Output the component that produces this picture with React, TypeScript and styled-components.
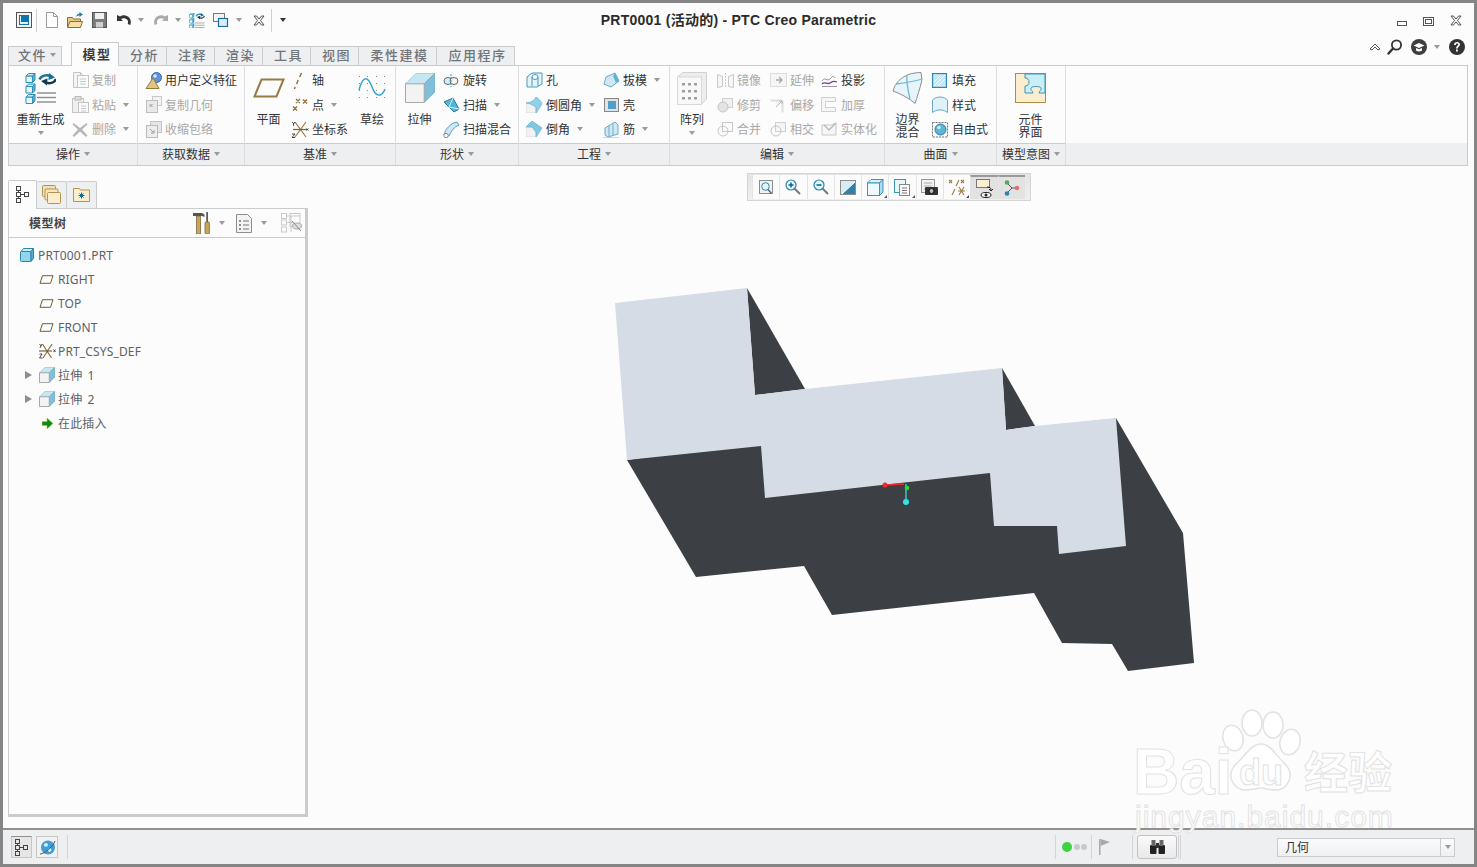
import React from 'react';
import styled, { createGlobalStyle } from 'styled-components';

const Global = createGlobalStyle`
  html, body { margin: 0; padding: 0; background: #fcfcfc; overflow: hidden; }
  body { font-family: "Noto Sans", "Noto Sans CJK SC", sans-serif; font-size: 12px; color: #3a3a3a; }
  * { box-sizing: border-box; }
`;

const line = '#c9cbcd';
const band = '#eeeff1';
const cjk = '"Noto Sans", "Noto Sans CJK SC", sans-serif';

/* ---------- icon drawings ---------- */
const IconSvg = styled.svg<{ $ml?: number }>`
  display: block;
  flex-shrink: 0;
  margin-left: ${p => p.$ml || 0}px;
`;

const Cube = ({ x, y, s, d = 3, front = '#e6f6fb', top = '#bfe8f5', side = '#5fb2d3', stroke = '#2f8fb5' }: any) => (
  <g stroke={stroke} strokeWidth="1" strokeLinejoin="round">
    <rect x={x} y={y + d} width={s - d} height={s - d} fill={front} />
    <polygon points={`${x},${y + d} ${x + d},${y} ${x + s},${y} ${x + s - d},${y + d}`} fill={top} />
    <polygon points={`${x + s - d},${y + d} ${x + s},${y} ${x + s},${y + s - d} ${x + s - d},${y + s}`} fill={side} />
  </g>
);

const Extrude = ({ s = 30 }: { s?: number }) => {
  const d = s * 0.36;
  return (
    <g strokeLinejoin="round">
      <polygon points={`0.5,${d} ${d},0.5 ${s - 0.5},0.5 ${s - d},${d}`} fill="#c6e6f1" stroke="#9fc9da" strokeWidth="0.8" />
      <polygon points={`${s - d},${d} ${s - 0.5},0.5 ${s - 0.5},${s - d} ${s - d},${s - 0.5}`} fill="#7fbfd9" stroke="#6aa9c4" strokeWidth="0.8" />
      <rect x="0.5" y={d} width={s - d - 0.5} height={s - d - 0.5} fill="#f3f3f3" stroke="#a8a8a8" strokeWidth="1" />
    </g>
  );
};

const Lines = ({ x, y, w, gap = 4.5, n = 3, c = '#8c8c8c', sw = 1.4 }: any) => (
  <g stroke={c} strokeWidth={sw}>
    {Array.from({ length: n }).map((_, i) => <line key={i} x1={x} x2={x + w} y1={y + i * gap} y2={y + i * gap} />)}
  </g>
);

const TreeGlyph = ({ c = '#444', sw = 1 }: { c?: string; sw?: number }) => (
  <g fill="none" stroke={c} strokeWidth={sw}>
    <rect x="1.5" y="0.5" width="4" height="4" />
    <rect x="1.5" y="6.5" width="4" height="4" />
    <rect x="1.5" y="12.5" width="4" height="4" />
    <rect x="9.5" y="6.5" width="4" height="4" />
    <path d="M3.5 4.5v2M3.5 10.5v2M5.5 8.5h4" />
  </g>
);

const Regen = () => (
  <>
    <Cube x={1} y={0.5} s={9} d={2.5} />
    <Cube x={1} y={11} s={9} d={2.5} />
    <Cube x={1} y={21.5} s={9} d={2.5} />
    <path d="M14.500 6.500C16 2.500 22 1 26 3.500" fill="none" stroke="#1a6f98" strokeWidth="2.400" />
    <polygon points="24,0 30,4.500 23.500,7" fill="#1a6f98" />
    <path d="M31 6C29.500 10 24 11.500 20 9" fill="none" stroke="#14384c" strokeWidth="2.400" />
    <polygon points="22,12.500 16,8 22.500,5.500" fill="#14384c" />
    <Lines x={12} y={20} w={19} />
  </>
);

const Doc = ({ c = '#bdbdbd', f = '#fff' }: any) => (
  <path d="M1.500.5h7l4 4v11h-11z M8.500.5v4h4" fill={f} stroke={c} strokeWidth="1" />
);

const Disc = ({ cx, cy, r, c = '#c4c4c4', f = '#f2f2f2' }: any) => (
  <circle cx={cx} cy={cy} r={r} fill={f} stroke={c} strokeWidth="1" />
);

const icons: Record<string, [number, number, React.ReactNode]> = {
  window: [16, 16, <><rect x=".5" y=".5" width="15" height="15" fill="#f4f4f4" stroke="#555" /><rect x="3" y="3" width="10" height="10" fill="#0f74ad" /><path d="M5 4v6h7v2H4V4z" fill="#dff2fa" /></>],
  newdoc: [13, 16, <Doc c="#9a9a9a" />],
  open: [16, 16, <><path d="M.5 5.500h5l1 1.500h7v8h-13z" fill="#e8c98b" stroke="#8e6c2f" /><path d="M.5 15.500l2.500-6h12.500l-2 6z" fill="#f6dfa9" stroke="#8e6c2f" /><path d="M9 5c.5-2.500 2-3.500 3.500-3.500V0L16 2.500 12.500 5V3.500C11 3.500 10 4 9 5z" fill="#2d7da6" /></>],
  save: [15, 16, <><rect x=".5" y=".5" width="14" height="15" fill="#7d7d7d" stroke="#555" /><rect x="3" y="1" width="9" height="6" fill="#f1f1f1" /><rect x="4" y="10" width="7" height="5.500" fill="#cfcfcf" /></>],
  undo: [16, 12, <path d="M1 1v6h6L5 5c2-1.500 5-1 6.500 1 .6 1 .7 2.500.3 4l2.500 1c1-2.500.6-5-.8-7-2.500-3-6.500-3.500-9.500-1.500z" fill="#333" />],
  redo: [16, 12, <path d="M15 1v6H9l2-2c-2-1.500-5-1-6.500 1-.6 1-.7 2.500-.3 4l-2.500 1c-1-2.500-.6-5 .8-7 2.500-3 6.500-3.500 9.500-1.500z" fill="#a9a9a9" />],
  regenS: [16, 15, <g transform="scale(.5)"><Regen /></g>],
  windows: [16, 14, <><rect x=".5" y=".5" width="11" height="8" fill="#f4f4f4" stroke="#777" /><rect x="5.500" y="5.500" width="9" height="8" fill="#d8eef7" stroke="#1c6f9c" strokeWidth="1.200" /></>],
  xclose: [12, 11, <path d="M1 1h2.500L6 4l2.500-3H11L7.500 5.500 11 10H8.500L6 7l-2.500 3H1l3.500-4.500z" fill="#f6f6f6" stroke="#444" strokeWidth=".9" />],
  minim: [10, 5, <rect x=".5" y=".5" width="9" height="4" fill="#fafafa" stroke="#555" />],
  maxim: [11, 9, <><rect x=".5" y=".5" width="10" height="8" fill="none" stroke="#555" /><rect x="2.500" y="2.500" width="6" height="4" fill="none" stroke="#555" /></>],
  chevron: [12, 8, <path d="M1 6l5-5 5 5-2 1-3-3-3 3z" fill="#fff" stroke="#444" strokeWidth=".9" />],
  search: [15, 16, <><circle cx="9.500" cy="6" r="4.600" fill="#fff" stroke="#333" strokeWidth="1.800" /><path d="M6 9.500l-4.500 5" stroke="#333" strokeWidth="2.400" strokeLinecap="round" /></>],
  learn: [16, 16, <><circle cx="8" cy="8" r="8" fill="#3c3f42" /><path d="M2.500 6.500L8 4l5.500 2.500L8 9z" fill="#fff" /><path d="M5 9v2.500c2 1.200 4 1.200 6 0V9L8 10.300z" fill="#fff" /></>],
  help: [16, 16, <><circle cx="8" cy="8" r="8" fill="#333" /><path d="M5 6c0-4 6-4 6-.5 0 2-2.300 2.200-2.300 4H7c0-2.500 2.200-2.700 2.200-4 0-1.300-2.400-1.300-2.400.5z" fill="#fff" /><rect x="7" y="10.500" width="1.800" height="2" fill="#fff" /></>],
  regen: [31, 31, <Regen />],
  copy: [17, 16, <><Doc c="#c4c4c4" f="#f4f4f4" /><g transform="translate(5 3)" opacity=".95"><rect x=".5" y=".5" width="11" height="12" fill="#fafafa" stroke="#c4c4c4" /><Lines x={3} y={4} w={6} gap={2.500} c="#c8c8c8" sw={1} /></g></>],
  paste: [17, 17, <><rect x=".5" y="2.500" width="11" height="14" fill="#efefef" stroke="#c4c4c4" /><rect x="3" y=".5" width="6" height="3.500" fill="#ddd" stroke="#bbb" /><rect x="6.500" y="6.500" width="10" height="10" fill="#fafafa" stroke="#c4c4c4" /><Lines x={9} y={10} w={5} gap={2.500} c="#c8c8c8" sw={1} /></>],
  del: [16, 15, <path d="M1.500 1l6.500 5 6.500-5 1 1.500L10 7.500l5.500 6-1.500 1.500L8 9.500 2 15 .5 13.500 6 7.500.5 2.500z" fill="#b6b6b6" />],
  udf: [18, 17, <><circle cx="11.500" cy="5.500" r="5" fill="#5f92d6" stroke="#3a66a8" /><circle cx="10" cy="4" r="1.800" fill="#d8e7fa" /><path d="M8 6l6 10.500H1z" fill="#e1c382" stroke="#967a3c" /></>],
  copygeo: [18, 17, <><rect x="7.500" y=".5" width="9" height="9" fill="#f3f3f3" stroke="#c9c9c9" /><rect x="1.500" y="4.500" width="11" height="12" fill="#e9e9e9" stroke="#bdbdbd" /><path d="M4.500 8l3 3M7.500 8l-3 3" stroke="#9b9b9b" /></>],
  shrink: [18, 17, <><rect x="5.500" y=".5" width="11" height="11" fill="#e6e6e6" stroke="#c4c4c4" /><rect x="1.500" y="4.500" width="11" height="12" fill="#ededed" stroke="#bbb" /><path d="M5 8l4 4m0-3v3H6" stroke="#9e9e9e" fill="none" /></>],
  plane: [32, 20, <polygon points="8.500,1.500 30.500,1.500 23.500,18.500 1.500,18.500" fill="#fcfcfc" stroke="#977a46" strokeWidth="2" />],
  axis: [12, 17, <path d="M9.500 1L7.700 5M6.200 8L4.600 12M3.200 15L2.400 17" stroke="#8a6d37" strokeWidth="1.400" fill="none" />],
  point: [16, 14, <g stroke="#8f6f38" strokeWidth="1.300"><path d="M4 1l4 4M8 1L4 5M11 1.500l4 4M15 1.500l-4 4M1 8.500l4 4M5 8.500l-4 4" /></g>],
  csys: [17, 17, <><path d="M3 1l11 15M14 1L3 16" stroke="#9a7b45" strokeWidth="1.200" fill="none" /><path d="M1 8.500h15" stroke="#7c6030" strokeWidth="1.200" /><path d="M0 1l2 2M3 1L1.500 3v1.800M0 13h3l-3 3.500h3M14.500 7.500l2 2M16.500 7.500l-2 2" stroke="#333" strokeWidth=".9" fill="none" /></>],
  sketch: [28, 28, <><g fill="#8c8c8c">{[2, 9, 16, 23].flatMap(y => [1, 9, 18, 26].map(x => <rect key={x + '-' + y} x={x} y={y} width="1" height="1" />))}</g><path d="M1 16C5 1 10 2 14 13s10 10 13 2" fill="none" stroke="#36a3d3" strokeWidth="1.500" /></>],
  extrude: [30, 30, <Extrude />],
  revolve: [17, 13, <><ellipse cx="5" cy="7" rx="4" ry="3.500" fill="#d5eff8" stroke="#666" /><ellipse cx="11" cy="7" rx="4" ry="3.500" fill="#f5f5f5" stroke="#666" /><path d="M8 0v13" stroke="#3a93bd" strokeDasharray="2 1" /></>],
  sweep: [17, 16, <><polygon points="1,5 10,1 16,12 11,15 6,10" fill="#54b5da" stroke="#26799e" /><path d="M6 10l4-9M6 10l10 2" stroke="#d9f1fa" /></>],
  sweepblend: [17, 17, <><path d="M1 14C2 8 8 2 14 1l2 3c-5 2-8 6-10 11z" fill="#cfe9f4" stroke="#5a9cba" /><circle cx="3" cy="14.500" r="2.200" fill="#fff" stroke="#888" /></>],
  hole: [17, 16, <><polygon points="1,5 6,1 16,1 16,12 11,15 1,15" fill="#e2f3f9" stroke="#4a9abc" /><ellipse cx="9" cy="5" rx="3" ry="2.500" fill="#fff" stroke="#4a9abc" /><path d="M6 5v9M12 5v9" stroke="#4a9abc" /></>],
  round: [17, 16, <><polygon points="0,6 7,6 10,12 10,16 0,16" fill="#f2f2f2" stroke="#ccc" strokeWidth=".6" /><path d="M0 6C4 6 9 3 10 0c3 2 5 4 6 7l-6 9v-6C7 8 3 6 0 6z" fill="#8ed1e8" stroke="#5aa9c8" strokeWidth=".6" /></>],
  chamfer: [17, 16, <><polygon points="0,6 7,6 10,12 10,16 0,16" fill="#f2f2f2" stroke="#ccc" strokeWidth=".6" /><polygon points="0,6 6,0 16,7 10,16 10,11 6,6" fill="#7fc9e3" stroke="#5aa9c8" strokeWidth=".6" /></>],
  draft: [17, 16, <><polygon points="3,5 12,1 16,9 8,15 1,12" fill="#cfe9f4" stroke="#6aaac6" /><polygon points="12,1 16,9 13,11 10,4" fill="#5cb3d6" /></>],
  shell: [17, 16, <><rect x="1.500" y="1.500" width="14" height="13" fill="#dde3e8" stroke="#888" /><rect x="5" y="4" width="8" height="8" fill="#4f9fc7" /></>],
  rib: [17, 17, <><polygon points="2,7 12,1 15,4 15,13 5,16 2,14" fill="#cfe9f4" stroke="#6aaac6" /><path d="M6 5v10M10 3v11" stroke="#6aaac6" /><path d="M.5 16.500h16" stroke="#aaa" strokeDasharray="1 1" /></>],
  array: [30, 33, <><polygon points="0.500,5 6,.5 29.500,.5 29.500,27 24,32.500 .5,32.500" fill="#ededed" stroke="#d0d0d0" /><rect x=".5" y="5" width="24" height="27.500" fill="#f8f8f8" stroke="#d8d8d8" /><g fill="#9f9f9f">{[11, 18, 25].flatMap(y => [5, 11, 17].map(x => <rect key={x + '-' + y} x={x} y={y} width="3" height="2.500" />))}</g></>],
  mirror: [17, 15, <g fill="#f6f6f6" stroke="#c9c9c9"><path d="M.5 1.500l5 2v10l-5 1zM16.500 1.500l-5 2v10l5 1z" /><path d="M8.500 0v15" strokeDasharray="2 1" /></g>],
  trim: [17, 16, <><rect x="5.500" y="1.500" width="10" height="9" fill="#f1f1f1" stroke="#cfcfcf" /><Disc cx={6} cy={10} r={5} f="#e4e4e4" /></>],
  merge: [17, 16, <><rect x="5.500" y="1.500" width="10" height="9" fill="none" stroke="#c7c7c7" /><Disc cx={6} cy={10} r={5} f="none" /></>],
  extend: [17, 14, <><rect x=".5" y=".5" width="16" height="13" fill="#f5f5f5" stroke="#dcdcdc" /><path d="M6 7h6m-3-3l3 3-3 3" fill="none" stroke="#a9a9a9" strokeWidth="1.300" /></>],
  offset: [17, 16, <><path d="M.5 3.500h12M12.500 3.500v12" fill="none" stroke="#ddd" strokeWidth="2" /><path d="M6 10l6-6m-3 0h3v3" fill="none" stroke="#b5b5b5" /></>],
  intersect: [17, 16, <><rect x="5.500" y="1.500" width="10" height="9" fill="#f5f5f5" stroke="#cfcfcf" /><Disc cx={6} cy={10} r={5} f="none" /></>],
  project: [17, 14, <><path d="M1 8c3-5 5 1 8-2s3-4 5-1" fill="none" stroke="#999" /><path d="M1 11c3-3 5 1 8-1s4-2 7-1" fill="none" stroke="#7c3c9e" strokeWidth="1.300" /><path d="M1 13.500h15" stroke="#999" /></>],
  thicken: [15, 15, <path d="M.5.5h14v4h-10v6h10v4H.5z" fill="#f6f6f6" stroke="#cfcfcf" />],
  solidify: [17, 15, <><path d="M1 3h9l5-2v12H1z" fill="#f6f6f6" stroke="#c7c7c7" /><path d="M3 3l5 5 7-7" fill="none" stroke="#bbb" strokeWidth="1.500" /></>],
  boundary: [31, 32, <><path d="M1 19C3 11 9 5 18 2c4-1 8-1.500 11-1.500l1 7C28 17 25 25 23 31.500 17 26 9 22 1 19z" fill="#e6f5fa" stroke="#8d8d8d" /><path d="M15 3c-1 7 1 15 3 24M4 12c8-1 16-2 26-5" fill="none" stroke="#6eb8d6" strokeWidth="1.300" /></>],
  fill: [15, 15, <><rect x=".5" y=".5" width="14" height="14" fill="#c5e8f4" stroke="#2d87ad" strokeWidth="1.300" /><path d="M2 13L13 2M2 9l7-7M6 13l7-7" stroke="#fff" /></>],
  style: [16, 17, <path d="M.5 4C5 0 11 0 15.500 4v12.500C11 13 5 13 .5 16.500z" fill="#dff2f9" stroke="#6aaac6" />],
  freeform: [17, 17, <><rect x=".5" y="1.500" width="15" height="14.500" fill="none" stroke="#777" strokeDasharray="2 1" /><circle cx="8.500" cy="8.500" r="5.500" fill="#5bb4d8" stroke="#2e7fa3" /><circle cx="7" cy="6.500" r="1.800" fill="#c9ecf7" /></>],
  component: [31, 30, <><rect x=".5" y=".5" width="30" height="29" fill="#fbeecf" stroke="#b08d46" strokeWidth="1" /><path d="M10 1H30V20H24C24 18 27 17 26 15 25 13 17 13 16 15 15 17 18 18 18 20H10V13C13 13 14 11 14 9 14 7 13 5 10 5Z" fill="#c9eef8" stroke="#3d94b8" /></>],
  fit: [14, 15, <><rect x=".5" y=".5" width="13" height="13" fill="#f2f2f2" stroke="#8d8d8d" /><circle cx="6.500" cy="6.500" r="3.800" fill="#e3f4fa" stroke="#2b86ad" /><path d="M9 9.500l3.500 4" stroke="#666" strokeWidth="1.500" /></>],
  zoomin: [16, 16, <><circle cx="6" cy="6" r="5" fill="#e3f4fa" stroke="#2b86ad" strokeWidth="1.200" /><path d="M3.500 6h5M6 3.500v5" stroke="#0f6087" strokeWidth="1.500" /><path d="M9.500 9.500l5.500 5.500" stroke="#777" strokeWidth="2" /></>],
  zoomout: [16, 16, <><circle cx="6" cy="6" r="5" fill="#e3f4fa" stroke="#2b86ad" strokeWidth="1.200" /><path d="M3.500 6h5" stroke="#0f6087" strokeWidth="1.500" /><path d="M9.500 9.500l5.500 5.500" stroke="#777" strokeWidth="2" /></>],
  repaint: [16, 15, <><rect x=".5" y=".5" width="15" height="14" fill="#d5edf6" stroke="#8d8d8d" /><path d="M2 14L15 2v12z" fill="#2f7fa6" /><path d="M2 14L15 2" stroke="#fff" /></>],
  viewcube: [17, 17, <><polygon points=".5,4 4,.5 16,.5 12.500,4" fill="#d9f1f9" stroke="#3d94b8" /><rect x=".5" y="4" width="12" height="12.500" fill="#eef9fc" stroke="#3d94b8" /><polygon points="12.500,4 16,.5 16,13 12.500,16.500" fill="#a8dcee" stroke="#3d94b8" /></>],
  saved: [17, 17, <><rect x=".5" y=".5" width="11" height="13" fill="#e8f5fa" stroke="#3d94b8" /><rect x="5.500" y="5.500" width="10" height="11" fill="#fafafa" stroke="#888" /><Lines x={8} y={9} w={5} gap={2.500} c="#777" sw={1} /></>],
  layers: [17, 17, <><rect x=".5" y=".5" width="13" height="13" fill="#f2f2f2" stroke="#999" /><Lines x={3} y={4} w={8} gap={3} c="#aaa" sw={1} /><rect x="4" y="8" width="13" height="8" rx="1" fill="#333" /><circle cx="10.500" cy="12" r="2.500" fill="#bbb" stroke="#111" /></>],
  datum: [18, 17, <g stroke="#9a7b45" strokeWidth="1.100" fill="none"><path d="M1 1l3 3M4 1L1 4" /><path d="M11 1l-3 6M7 10l-3 6" /><path d="M11 8l5 8M16 8l-5 8M10 12h7" /><path d="M13 1l3 3M16 1l-3 3" /></g>],
  display: [18, 19, <><rect x=".5" y=".5" width="13" height="8" fill="#faefd2" stroke="#777" /><path d="M11 8c3 0 4 1 4 3m-2-1l2 2 2-2" stroke="#222" fill="none" /><ellipse cx="10" cy="16" rx="5" ry="2.500" fill="#fff" stroke="#222" /><circle cx="10" cy="16" r="1.500" fill="#222" /></>],
  nodes: [16, 16, <><path d="M3 3l5 5-5 5M8 8h5" stroke="#555" fill="none" /><circle cx="3" cy="2.500" r="2.300" fill="#55a854" /><circle cx="3" cy="13.500" r="2.300" fill="#2f7fb0" /><circle cx="13" cy="8" r="2.300" fill="#e2706e" /></>],
  tree: [15, 17, <TreeGlyph />],
  folders: [19, 19, <><rect x=".5" y=".5" width="13" height="11" rx="1" fill="#f4dfb0" stroke="#b5944d" /><rect x="3" y="4" width="13" height="11" rx="1" fill="#f7e5bd" stroke="#b5944d" /><rect x="5.500" y="7.500" width="13" height="11" rx="1" fill="#fbeecf" stroke="#b5944d" /></>],
  favfolder: [17, 16, <><path d="M.5 2.500h6l1 1.500h9v11.500H.5z" fill="#fbeecf" stroke="#b5944d" /><path d="M8.500 6.500v6M5.500 9.500h6M6.500 7.500l4 4M10.500 7.500l-4 4" stroke="#136c96" /></>],
  tools: [17, 22, <><rect x="3.500" y="4" width="4" height="18" fill="#c9a659" stroke="#6d5a2e" strokeWidth=".7" /><path d="M0 1h9l2.500 1.500V5L9 4H0z" fill="#555" /><rect x="13.400" y="0" width="1.400" height="10" fill="#333" /><rect x="12" y="10" width="4.400" height="12" rx="1" fill="#c9a659" stroke="#6d5a2e" strokeWidth=".7" /></>],
  list: [16, 19, <><path d="M.5.5h11l4 4v14H.5z" fill="#f3f3f3" stroke="#8d8d8d" /><g fill="#8d8d8d">{[6, 10, 14].map(y => <rect key={y} x="3" y={y} width="2" height="2" />)}</g><Lines x={7} y={7} w={6} gap={4} c="#777" sw={1} /></>],
  treehide: [21, 20, <><g stroke="#c9c9c9" fill="none"><rect x=".5" y=".5" width="5" height="5" /><rect x=".5" y="7" width="5" height="5" /><rect x=".5" y="14" width="5" height="5" /><path d="M5.500 3H19M5.500 9.500H12M10 3v16" /><rect x="9" y=".5" width="10" height="13" /></g><ellipse cx="16" cy="13" rx="4.500" ry="3" fill="#ddd" stroke="#aaa" /><path d="M11 8l9 10" stroke="#888" /></>],
  part: [14, 14, <><polygon points="1,3.500 3.500,.5 13.500,.5 11,3.500" fill="#c5ecf8" stroke="#2e86ab" /><rect x=".5" y="3.500" width="10.500" height="10" rx="1" fill="#8ed7ee" stroke="#2e86ab" /><polygon points="11,3.500 13.500,.5 13.500,10.500 11,13.500" fill="#55abcb" stroke="#2e86ab" /></>],
  planeS: [15, 9, <polygon points="3.500,.7 14,.7 11.500,8.300 1,8.300" fill="none" stroke="#765c2d" strokeWidth="1" />],
  csysTree: [17, 16, <><path d="M3.500 1l9 14M13 1L4 15" stroke="#8a6a34" strokeWidth="1.100" fill="none" /><path d="M0 8h13" stroke="#5d4824" /><path d="M.5 1l1.500 2M3 1L1 5M.5 11h2.500l-2.500 4h3M14.500 6.500l2 2.500M16.500 6.500l-2 2.500" stroke="#222" strokeWidth=".8" fill="none" /></>],
  extrudeS: [16, 16, <Extrude s={16} />],
  insert: [11, 11, <path d="M0 3.500h5V0l6 5.500L5 11V7.500H0z" fill="#0f8a1a" stroke="#b6d400" strokeWidth=".6" />],
  globe: [17, 17, <><circle cx="9" cy="8.500" r="7" fill="#3f9fd6" /><path d="M5 5c2-2 4-1 4 1s-3 2-4 1zM10 9c2 0 3 1 2 3s-3 1-3-1z" fill="#d2eefa" /><path d="M1 15C5 15 14 8 16 2" fill="none" stroke="#555" /></>],
  flag: [11, 16, <><rect x="0" y="0" width="1.500" height="16" fill="#a9a9a9" /><path d="M1.500 0l9.500 3-9.500 4z" fill="#a9a9a9" /></>],
  binoculars: [17, 16, <><rect x="1" y="6" width="6.500" height="9" rx="1" fill="#222" /><rect x="9.500" y="6" width="6.500" height="9" rx="1" fill="#222" /><rect x="2.500" y="1" width="4" height="6" fill="#666" /><rect x="10.500" y="1" width="4" height="6" fill="#666" /><rect x="7" y="4" width="3" height="5" fill="#333" /></>],
};

const Ico = ({ n, ml }: { n: string; ml?: number }) => {
  const [w, h, body] = icons[n];
  return <IconSvg $ml={ml} width={w} height={h} viewBox={`0 0 ${w} ${h}`}>{body}</IconSvg>;
};

/* ---------- window frame ---------- */
const Frame = styled.div`
  position: relative;
  width: 1477px;
  height: 867px;
  display: flex;
  flex-direction: column;
  border: 3px solid #858585;
  background: #fcfcfc;
  overflow: hidden;
`;

const TitleBar = styled.header`
  height: 39px;
  flex: none;
  display: grid;
  grid-template-columns: 1fr auto 1fr;
  align-items: center;
  padding-bottom: 5px;
`;

const QuickBar = styled.div`
  display: flex;
  align-items: center;
  padding-left: 13px;
`;

const QuickSep = styled.span<{ $ml: number }>`
  width: 1px;
  height: 23px;
  margin-left: ${p => p.$ml}px;
  background: #cfcfcf;
`;

const Title = styled.h1`
  margin: -2px 0 0;
  font: 700 14px "Liberation Sans", "Noto Sans CJK SC", sans-serif;
  letter-spacing: 0.25px;
  color: #2b2b2b;
`;

const WinButtons = styled.div`
  display: flex;
  justify-content: flex-end;
  align-items: flex-end;
  padding-right: 12px;
  gap: 16px;
`;

const Caret = styled.span<{ $ml?: number; $dark?: boolean }>`
  flex: none;
  width: 0;
  height: 0;
  margin-left: ${p => p.$ml || 0}px;
  border-left: 3.5px solid transparent;
  border-right: 3.5px solid transparent;
  border-top: 4px solid ${p => (p.$dark ? '#333' : '#9a9a9a')};
`;

/* ---------- tabs ---------- */
const TabRow = styled.nav`
  height: 24px;
  flex: none;
  display: flex;
  align-items: flex-end;
  padding-left: 5px;
  position: relative;
  margin-bottom: -1px;
`;

const Tab = styled.div<{ $w: number; $active?: boolean; $ml?: number }>`
  position: relative;
  width: ${p => p.$w}px;
  height: ${p => (p.$active ? 24 : 20)}px;
  margin-left: ${p => p.$ml || 0}px;
  padding: 0 0 3px 4px;
  display: flex;
  align-items: center;
  justify-content: center;
  gap: 3px;
  background: ${p => (p.$active ? '#fcfcfc' : band)};
  border: 1px solid ${line};
  border-left-width: ${p => (p.$active || p.$ml !== undefined ? 1 : 0)}px;
  border-bottom: ${p => (p.$active ? 'none' : `1px solid ${line}`)};
  z-index: ${p => (p.$active ? 2 : 1)};
  font-family: ${cjk};
  font-size: 13px;
  font-weight: ${p => (p.$active ? 700 : 500)};
  letter-spacing: 1.5px;
  color: ${p => (p.$active ? '#3c3c3c' : '#70757a')};
`;

const RightTools = styled.div`
  margin-left: auto;
  align-self: flex-start;
  display: flex;
  align-items: center;
  padding: 0 9px 0 0;
  transform: translateY(-3px);
`;

/* ---------- ribbon ---------- */
const Ribbon = styled.section`
  flex: none;
  height: 101px;
  margin: 0 6px 0 5px;
  display: flex;
  border: 1px solid ${line};
  background:
    linear-gradient(${band}, ${band}) bottom / 100% 22px no-repeat,
    #fcfcfc;
`;

const Group = styled.div<{ $w: number }>`
  width: ${p => p.$w}px;
  flex: none;
  display: flex;
  flex-direction: column;
  border-right: 1px solid #dcdde0;
`;

const GroupBody = styled.div<{ $pl?: number }>`
  height: 77px;
  display: flex;
  padding-left: ${p => p.$pl || 0}px;
`;

const GroupFoot = styled.div`
  height: 22px;
  padding-bottom: 2px;
  border-top: 1px solid ${line};
  display: flex;
  align-items: center;
  justify-content: center;
  gap: 4px;
  font-family: ${cjk};
  font-size: 12px;
  color: #333;
`;

const BigBtn = styled.div<{ $w: number; $pr?: number }>`
  width: ${p => p.$w}px;
  padding-right: ${p => p.$pr || 0}px;
  flex: none;
  display: flex;
  flex-direction: column;
  align-items: center;
`;

const BigIcon = styled.div`
  height: 48px;
  padding-bottom: 4px;
  display: flex;
  align-items: center;
  justify-content: center;
`;

const BigLabel = styled.div`
  font-family: ${cjk};
  font-size: 12px;
  line-height: 12.5px;
  text-align: center;
  color: #333;
  margin-bottom: 4px;
`;

const ToolCol = styled.div<{ $w?: number }>`
  width: ${p => (p.$w ? `${p.$w}px` : 'auto')};
  flex: none;
  padding-top: 2px;
  display: flex;
  flex-direction: column;
`;

const ToolRow = styled.div<{ $off?: boolean }>`
  height: 24.5px;
  display: flex;
  align-items: center;
  font-family: ${cjk};
  font-size: 12px;
  white-space: nowrap;
  color: ${p => (p.$off ? '#a8a8a8' : '#333')};
`;

const ToolIcon = styled.span`
  width: 20px;
  flex: none;
  display: flex;
  align-items: center;
`;

/* ---------- main ---------- */
const Main = styled.main`
  flex: 1;
  min-height: 0;
  display: flex;
`;

const Side = styled.aside`
  width: 305px;
  flex: none;
  padding: 14px 0 11px 5px;
  display: flex;
  flex-direction: column;
`;

const SideTabs = styled.div`
  display: flex;
  height: 29px;
  flex: none;
  align-items: flex-end;
  margin-bottom: -1px;
`;

const SideTab = styled.div<{ $active?: boolean }>`
  position: relative;
  z-index: ${p => (p.$active ? 2 : 0)};
  width: ${p => (p.$active ? 29 : 30)}px;
  height: ${p => (p.$active ? 29 : 28)}px;
  padding-bottom: 2px;
  display: flex;
  align-items: center;
  justify-content: center;
  background: ${p => (p.$active ? '#fcfcfc' : band)};
  border: 1px solid ${line};
  border-left-width: ${p => (p.$active ? 1 : 0)}px;
  border-bottom: ${p => (p.$active ? 'none' : `1px solid ${line}`)};
  border-radius: 2px 2px 0 0;
`;

const TreePanel = styled.div`
  flex: 1;
  min-height: 0;
  display: flex;
  flex-direction: column;
  border: 1px solid ${line};
  border-right-width: 3px;
  border-bottom-width: 3px;
  background: #fcfcfc;
`;

const TreeHead = styled.div`
  height: 29px;
  flex: none;
  display: flex;
  align-items: center;
  padding-left: 20px;
  border-bottom: 1px solid ${line};
`;

const TreeTitle = styled.div`
  margin-right: auto;
  font-family: ${cjk};
  font-size: 12px;
  font-weight: 700;
  letter-spacing: .5px;
  color: #444;
`;

const HeadTools = styled.div`
  display: flex;
  align-items: center;
  padding-right: 3px;
`;

const TreeBody = styled.div`
  padding-top: 5px;
`;

const TreeRow = styled.div<{ $root?: boolean }>`
  height: 24px;
  display: flex;
  align-items: center;
  padding-left: ${p => (p.$root ? 11 : 16)}px;
  font-family: ${cjk};
  font-size: 12px;
  letter-spacing: .15px;
  word-spacing: 2px;
  color: #5b6268;
`;

const ArrowSlot = styled.span`
  width: 14px;
  flex: none;
`;

const Arrow = styled.span`
  flex: none;
  width: 0;
  height: 0;
  margin-right: 7px;
  border-left: 7px solid #8e8e8e;
  border-top: 4.5px solid transparent;
  border-bottom: 4.5px solid transparent;
  box-sizing: content-box;
`;

const RowIcon = styled.span<{ $pl?: number; $w?: number }>`
  width: ${p => p.$w || 19}px;
  padding-left: ${p => p.$pl || 0}px;
  flex: none;
  display: flex;
  align-items: center;
`;

const Canvas = styled.div`
  position: relative;
  flex: 1;
  min-width: 0;
`;

const ModelDrawing = styled.svg`
  display: block;
  width: 100%;
  height: 100%;
`;

const ViewBar = styled.div`
  position: absolute;
  top: 7px;
  left: 439px;
  height: 28px;
  width: 284px;
  display: flex;
  align-items: stretch;
  padding: 1px 4px 1px 4px;
  border: 1px solid #d4d4d4;
  background: linear-gradient(#e4e4e4, #efefef);
`;

const ViewBtn = styled.div<{ $on?: boolean; $more?: boolean }>`
  position: relative;
  width: 27.3px;
  display: flex;
  align-items: center;
  justify-content: center;
  background: ${p => (p.$on ? '#e2e2e2' : '#fbfbfb')};
  border-left: 1px solid #e3e3e3;
  border-top: ${p => (p.$on ? '2px solid #9a9a9a' : 'none')};
  &::after {
    content: '';
    display: ${p => (p.$more ? 'block' : 'none')};
    position: absolute;
    right: 1px;
    bottom: 1px;
    border-left: 3px solid transparent;
    border-bottom: 3px solid #555;
  }
`;

/* ---------- status bar ---------- */
const StatusBar = styled.footer`
  height: 36px;
  flex: none;
  display: flex;
  align-items: center;
  background: ${band};
  border-top: 2px solid #909090;
`;

const StatusBtn = styled.div<{ $w: number; $ml: number; $on?: boolean }>`
  width: ${p => p.$w}px;
  height: 22px;
  margin-left: ${p => p.$ml}px;
  display: flex;
  align-items: center;
  justify-content: center;
  background: ${p => (p.$on ? '#e6e6e6' : '#f2f2f2')};
  border: 1px solid #c6c6c6;
  border-top-color: ${p => (p.$on ? '#8f8f8f' : '#c6c6c6')};
`;

const StatusSep = styled.span<{ $ml: number }>`
  width: 1px;
  height: 24px;
  margin-left: ${p => p.$ml}px;
  background: #d4d5d8;
`;

const StatusRight = styled.div`
  margin-left: auto;
  display: flex;
  align-items: center;
  padding-right: 19px;
`;

const Dot = styled.span<{ $size: number; $c: string; $ml: number }>`
  width: ${p => p.$size}px;
  height: ${p => p.$size}px;
  margin-left: ${p => p.$ml}px;
  border-radius: 50%;
  background: ${p => p.$c};
`;

const FindBtn = styled.div`
  width: 40px;
  height: 24px;
  margin-left: 4px;
  display: flex;
  align-items: center;
  justify-content: center;
  background: linear-gradient(#fafafa, #e9e9e9);
  border: 1px solid #c3c3c3;
  border-radius: 3px;
`;

const Combo = styled.div`
  width: 178px;
  height: 19px;
  margin-left: 96px;
  display: flex;
  align-items: center;
  background: linear-gradient(#fbfbfb, #f0f0f0);
  border: 1px solid ${line};
  font-family: ${cjk};
  font-size: 12px;
  color: #333;
`;

const ComboText = styled.span`
  flex: 1;
  padding-left: 7px;
  margin-top: -1px;
`;

const ComboBtn = styled.span`
  width: 14px;
  height: 100%;
  border-left: 1px solid ${line};
  display: flex;
  align-items: center;
  justify-content: center;
`;

/* ---------- watermark ---------- */
const Watermark = styled.div`
  position: absolute;
  left: 1129px;
  top: 702px;
  width: 272px;
  height: 136px;
  pointer-events: none;
  z-index: 5;
`;

const Paw = styled.svg`
  position: absolute;
  left: 88px;
  top: 3px;
`;

const WmText = styled.span<{ $x: number; $y: number; $size: number; $weight?: number; $ls?: number }>`
  position: absolute;
  left: ${p => p.$x}px;
  top: ${p => p.$y}px;
  font-family: "Liberation Sans", "Noto Sans CJK SC", sans-serif;
  font-size: ${p => p.$size}px;
  font-weight: ${p => p.$weight || 400};
  letter-spacing: ${p => p.$ls || 0}px;
  line-height: 1;
  white-space: nowrap;
  color: #ffffff;
  -webkit-text-stroke: 1px #e2e2e2;
`;

/* ---------- data ---------- */
type T = { n: string; t: string; off?: boolean; caret?: number };

const Tools = ({ items, w }: { items: T[]; w?: number }) => (
  <ToolCol $w={w}>
    {items.map(i => (
      <ToolRow key={i.t} $off={i.off}>
        <ToolIcon><Ico n={i.n} /></ToolIcon>
        {i.t}
        {i.caret !== undefined && <Caret $ml={i.caret} />}
      </ToolRow>
    ))}
  </ToolCol>
);

const Big = ({ n, w, pr, label, caret }: { n: string; w: number; pr?: number; label: string[]; caret?: boolean }) => (
  <BigBtn $w={w} $pr={pr}>
    <BigIcon><Ico n={n} /></BigIcon>
    <BigLabel>
      {label.map((l, i) => <React.Fragment key={l}>{i > 0 && <br />}{l}</React.Fragment>)}
    </BigLabel>
    {caret && <Caret />}
  </BigBtn>
);

const Foot = ({ t }: { t: string }) => <GroupFoot>{t}<Caret /></GroupFoot>;

const light = '615,303 747,288 755,395 805,389 1002,368 1006,430 1035,426 1116,418 1126,546 1059,554 1057,526 994,526 990,473 765,498 761,446 627,460';
const dark = '627,460 696,577 804,566 832,615 1034,593 1062,643 1112,644 1128,671 1194,663 1183,533 1116,418 1000,470 760,440';
const viewIcons: [string, boolean][] = [['fit', false], ['zoomin', false], ['zoomout', false], ['repaint', false], ['viewcube', true], ['saved', true], ['layers', false], ['datum', true]];

export default function App() {
  return (
    <Frame>
      <Global />
      <TitleBar>
        <QuickBar>
          <Ico n="window" />
          <QuickSep $ml={4} />
          <Ico n="newdoc" ml={8} />
          <Ico n="open" ml={9} />
          <Ico n="save" ml={9} />
          <Ico n="undo" ml={9} />
          <Caret $ml={6} />
          <Ico n="redo" ml={9} />
          <Caret $ml={6} />
          <Ico n="regenS" ml={8} />
          <Ico n="windows" ml={8} />
          <Caret $ml={7} />
          <Ico n="xclose" ml={11} />
          <QuickSep $ml={6} />
          <Caret $ml={8} $dark />
        </QuickBar>
        <Title>PRT0001 (活动的) - PTC Creo Parametric</Title>
        <WinButtons>
          <Ico n="minim" />
          <Ico n="maxim" />
          <Ico n="xclose" />
        </WinButtons>
      </TitleBar>

      <TabRow>
        <Tab $w={54} $ml={0}>文件<Caret /></Tab>
        <Tab $w={48} $ml={9} $active>模型</Tab>
        <Tab $w={48}>分析</Tab>
        <Tab $w={48}>注释</Tab>
        <Tab $w={48}>渲染</Tab>
        <Tab $w={48}>工具</Tab>
        <Tab $w={48}>视图</Tab>
        <Tab $w={78}>柔性建模</Tab>
        <Tab $w={78}>应用程序</Tab>
        <RightTools>
          <Ico n="chevron" />
          <Ico n="search" ml={6} />
          <Ico n="learn" ml={9} />
          <Caret $ml={7} />
          <Ico n="help" ml={9} />
        </RightTools>
      </TabRow>

      <Ribbon>
        <Group $w={129}>
          <GroupBody>
            <Big n="regen" w={63} label={['重新生成']} caret />
            <Tools items={[
              { n: 'copy', t: '复制', off: true },
              { n: 'paste', t: '粘贴', off: true, caret: 7 },
              { n: 'del', t: '删除', off: true, caret: 7 },
            ]} />
          </GroupBody>
          <Foot t="操作" />
        </Group>
        <Group $w={107}>
          <GroupBody $pl={7}>
            <Tools items={[
              { n: 'udf', t: '用户定义特征' },
              { n: 'copygeo', t: '复制几何', off: true },
              { n: 'shrink', t: '收缩包络', off: true },
            ]} />
          </GroupBody>
          <Foot t="获取数据" />
        </Group>
        <Group $w={151}>
          <GroupBody>
            <Big n="plane" w={47} label={['平面']} />
            <Tools w={58} items={[
              { n: 'axis', t: '轴' },
              { n: 'point', t: '点', caret: 7 },
              { n: 'csys', t: '坐标系' },
            ]} />
            <Big n="sketch" w={44} label={['草绘']} />
          </GroupBody>
          <Foot t="基准" />
        </Group>
        <Group $w={123}>
          <GroupBody>
            <Big n="extrude" w={47} label={['拉伸']} />
            <Tools items={[
              { n: 'revolve', t: '旋转' },
              { n: 'sweep', t: '扫描', caret: 7 },
              { n: 'sweepblend', t: '扫描混合' },
            ]} />
          </GroupBody>
          <Foot t="形状" />
        </Group>
        <Group $w={151}>
          <GroupBody $pl={7}>
            <Tools w={77} items={[
              { n: 'hole', t: '孔' },
              { n: 'round', t: '倒圆角', caret: 7 },
              { n: 'chamfer', t: '倒角', caret: 7 },
            ]} />
            <Tools items={[
              { n: 'draft', t: '拔模', caret: 7 },
              { n: 'shell', t: '壳' },
              { n: 'rib', t: '筋', caret: 7 },
            ]} />
          </GroupBody>
          <Foot t="工程" />
        </Group>
        <Group $w={215}>
          <GroupBody>
            <Big n="array" w={47} pr={3} label={['阵列']} caret />
            <Tools w={53} items={[
              { n: 'mirror', t: '镜像', off: true },
              { n: 'trim', t: '修剪', off: true },
              { n: 'merge', t: '合并', off: true },
            ]} />
            <Tools w={51} items={[
              { n: 'extend', t: '延伸', off: true },
              { n: 'offset', t: '偏移', off: true },
              { n: 'intersect', t: '相交', off: true },
            ]} />
            <Tools items={[
              { n: 'project', t: '投影' },
              { n: 'thicken', t: '加厚', off: true },
              { n: 'solidify', t: '实体化', off: true },
            ]} />
          </GroupBody>
          <Foot t="编辑" />
        </Group>
        <Group $w={112}>
          <GroupBody>
            <Big n="boundary" w={47} pr={2} label={['边界', '混合']} />
            <Tools items={[
              { n: 'fill', t: '填充' },
              { n: 'style', t: '样式' },
              { n: 'freeform', t: '自由式' },
            ]} />
          </GroupBody>
          <Foot t="曲面" />
        </Group>
        <Group $w={69}>
          <GroupBody>
            <Big n="component" w={67} label={['元件', '界面']} />
          </GroupBody>
          <Foot t="模型意图" />
        </Group>
      </Ribbon>

      <Main>
        <Side>
          <SideTabs>
            <SideTab $active><Ico n="tree" /></SideTab>
            <SideTab><Ico n="folders" /></SideTab>
            <SideTab><Ico n="favfolder" /></SideTab>
          </SideTabs>
          <TreePanel>
            <TreeHead>
              <TreeTitle>模型树</TreeTitle>
              <HeadTools>
                <Ico n="tools" />
                <Caret $ml={9} />
                <Ico n="list" ml={11} />
                <Caret $ml={9} />
                <Ico n="treehide" ml={14} />
              </HeadTools>
            </TreeHead>
            <TreeBody>
              <TreeRow $root><RowIcon $w={18}><Ico n="part" /></RowIcon>PRT0001.PRT</TreeRow>
              <TreeRow><ArrowSlot /><RowIcon><Ico n="planeS" /></RowIcon>RIGHT</TreeRow>
              <TreeRow><ArrowSlot /><RowIcon><Ico n="planeS" /></RowIcon>TOP</TreeRow>
              <TreeRow><ArrowSlot /><RowIcon><Ico n="planeS" /></RowIcon>FRONT</TreeRow>
              <TreeRow><ArrowSlot /><RowIcon><Ico n="csysTree" /></RowIcon>PRT_CSYS_DEF</TreeRow>
              <TreeRow><Arrow /><RowIcon><Ico n="extrudeS" /></RowIcon>拉伸 1</TreeRow>
              <TreeRow><Arrow /><RowIcon><Ico n="extrudeS" /></RowIcon>拉伸 2</TreeRow>
              <TreeRow><ArrowSlot /><RowIcon $pl={3}><Ico n="insert" /></RowIcon>在此插入</TreeRow>
            </TreeBody>
          </TreePanel>
        </Side>

        <Canvas>
          <ModelDrawing viewBox="308 166 1166 662" preserveAspectRatio="xMinYMin">
            <polygon points={dark} fill="#3c3f43" />
            <polygon points="747,288 805,389 755,395" fill="#3c3f43" />
            <polygon points="1002,368 1035,426 1006,430" fill="#3c3f43" />
            <polygon points={light} fill="#d5dce6" />
            <path d="M885 485L904 484" stroke="#f02a2a" strokeWidth="1.500" />
            <path d="M906 484V502" stroke="#30e0e0" strokeWidth="1.300" />
            <circle cx="885" cy="485" r="2.500" fill="#f02a2a" />
            <circle cx="907" cy="488" r="2.300" fill="#2fd62f" />
            <circle cx="906" cy="502" r="3" fill="#2fe6e6" />
          </ModelDrawing>
          <ViewBar>
            {viewIcons.map(([n, more]) => <ViewBtn key={n} $more={more}><Ico n={n} /></ViewBtn>)}
            <ViewBtn $on><Ico n="display" /></ViewBtn>
            <ViewBtn $on><Ico n="nodes" /></ViewBtn>
          </ViewBar>
        </Canvas>
      </Main>

      <StatusBar>
        <StatusBtn $w={21} $ml={8} $on><Ico n="tree" /></StatusBtn>
        <StatusBtn $w={22} $ml={4}><Ico n="globe" /></StatusBtn>
        <StatusSep $ml={9} />
        <StatusRight>
          <StatusSep $ml={0} />
          <Dot $size={10} $c="#3fd146" $ml={6} />
          <Dot $size={6} $c="#c9c9c9" $ml={2} />
          <Dot $size={6} $c="#c9c9c9" $ml={1} />
          <StatusSep $ml={4} />
          <Ico n="flag" ml={7} />
          <StatusSep $ml={22} />
          <FindBtn><Ico n="binoculars" /></FindBtn>
          <StatusSep $ml={1} />
          <StatusSep $ml={1} />
          <Combo>
            <ComboText>几何</ComboText>
            <ComboBtn><Caret /></ComboBtn>
          </Combo>
        </StatusRight>
      </StatusBar>

      <Watermark>
        <Paw width="90" height="90" viewBox="0 0 90 90">
          <g fill="#fff" stroke="#e2e2e2" strokeWidth="1.500">
            <ellipse cx="13" cy="30" rx="10" ry="13" transform="rotate(-15 13 30)" />
            <ellipse cx="32" cy="15" rx="10" ry="13" />
            <ellipse cx="53" cy="17" rx="10" ry="13" />
            <ellipse cx="70" cy="34" rx="10" ry="13" transform="rotate(15 70 34)" />
            <path d="M41 36c10 0 15 12 24 20 10 10 4 26-10 26-6 0-9-2-14-2s-9 2-15 2C12 82 6 66 16 56c9-8 15-20 25-20z" />
          </g>
        </Paw>
        <WmText $x={1} $y={35} $size={64} $weight={700}>Bai</WmText>
        <WmText $x={107} $y={50} $size={36} $weight={700}>du</WmText>
        <WmText $x={172} $y={47} $size={44} $weight={700}>经验</WmText>
        <WmText $x={3} $y={97} $size={30} $ls={1}>jingyan.baidu.com</WmText>
      </Watermark>
    </Frame>
  );
}
